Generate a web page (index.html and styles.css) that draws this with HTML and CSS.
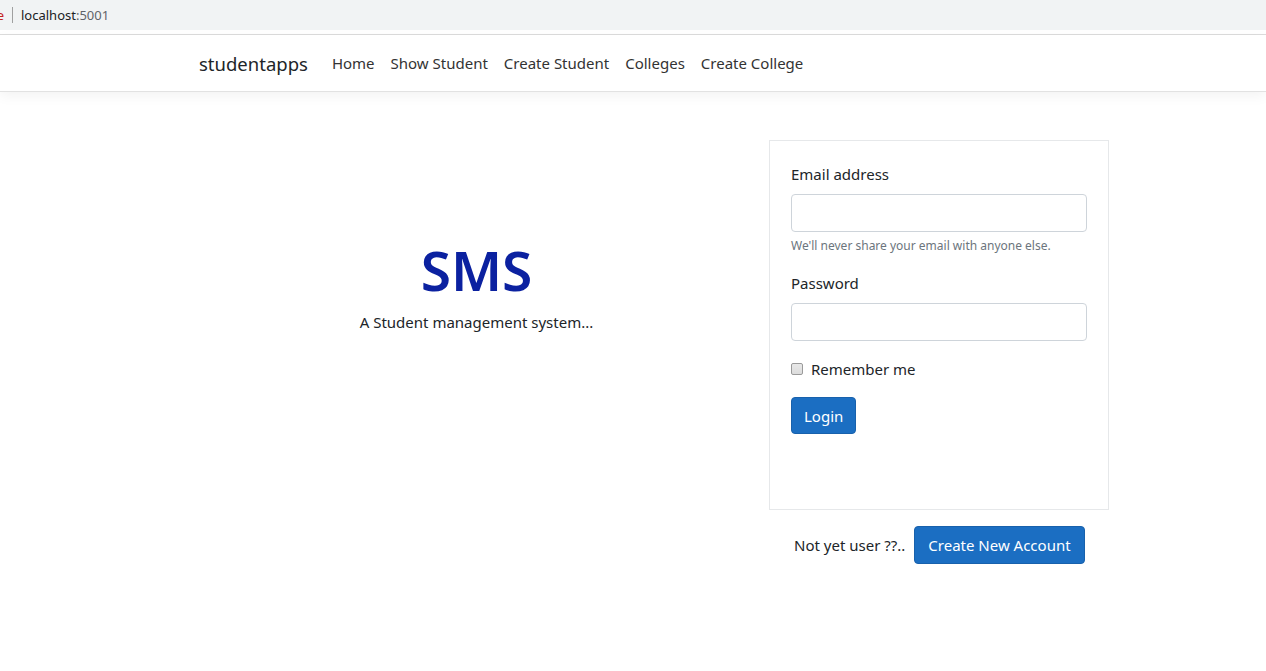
FILE: index.html
```html
<!DOCTYPE html>
<html lang="en">
<head>
<meta charset="utf-8">
<title>studentapps</title>
<link rel="stylesheet" href="styles.css">
</head>
<body>
<div class="chrome">
  <div class="addr"><span class="sec">e</span><span class="sep"></span><span class="host">localhost</span><span class="port">:5001</span></div>
</div>
<nav class="navbar">
  <a class="brand" href="#">studentapps</a>
  <ul class="nav-links">
    <li><a href="#">Home</a></li>
    <li><a href="#">Show Student</a></li>
    <li><a href="#">Create Student</a></li>
    <li><a href="#">Colleges</a></li>
    <li><a href="#">Create College</a></li>
  </ul>
</nav>
<main class="main">
  <section class="intro">
    <h1 class="title">SMS</h1>
    <p class="subtitle">A Student management system...</p>
  </section>
  <section class="side">
    <form class="card">
      <div class="group">
        <label class="label">Email address</label>
        <input class="input" type="email">
        <small class="help">We'll never share your email with anyone else.</small>
      </div>
      <div class="group">
        <label class="label">Password</label>
        <input class="input" type="password">
      </div>
      <div class="group check">
        <input class="checkbox" type="checkbox" id="rem">
        <label for="rem" class="check-label">Remember me</label>
      </div>
      <button class="btn" type="button">Login</button>
    </form>
    <div class="signup">
      <span class="signup-text">Not yet user ??..</span>
      <button class="btn btn-lg" type="button">Create New Account</button>
    </div>
  </section>
</main>
</body>
</html>
```

FILE: styles.css
```css
* { box-sizing: border-box; }
html, body { margin: 0; padding: 0; }
body {
  font-family: "Noto Sans", "Open Sans", sans-serif;
  font-size: 15px;
  color: #212529;
  background: #fff;
}
.chrome {
  height: 35px;
  background: #fff;
  border-bottom: 1px solid #dcdcdc;
}
.addr {
  height: 30px;
  background: #f1f3f4;
  display: flex;
  align-items: center;
  font-size: 13px;
  color: #202124;
}
.sec { color: #c5221f; width: 4px; overflow: hidden; display: inline-flex; justify-content: flex-end; }
.sep { width: 1px; height: 16px; background: #a0a0a0; margin: 0 8px 0 8px; }
.port { color: #5f6368; }
.navbar {
  height: 57px;
  display: flex;
  align-items: center;
  padding-left: 199px;
  border-bottom: 1px solid #e2e2e2;
  box-shadow: 0 4px 12px rgba(0,0,0,0.05);
}
.brand {
  font-size: 18.5px;
  color: #212529;
  text-decoration: none;
  margin-right: 16px;
}
.nav-links { display: flex; list-style: none; margin: 0; padding: 0; }
.nav-links a {
  display: block;
  padding: 8px 8px;
  color: #333;
  text-decoration: none;
}
.main {
  display: grid;
  grid-template-columns: 585px 340px;
  margin-left: 184px;
  padding-top: 48px;
}
.intro { text-align: center; padding-top: 95px; }
.title {
  margin: 0;
  font-size: 55px;
  font-weight: 600;
  line-height: 70px;
  color: #0b21a0;
}
.subtitle { margin: 5px 0 0; line-height: 24px; }
.card {
  border: 1px solid #e6e8ea;
  padding: 21px 21px 75px;
  display: flex;
  flex-direction: column;
  align-items: flex-start;
}
.group { width: 100%; margin-bottom: 16px; }
.label { display: block; line-height: 24px; margin-bottom: 8px; }
.input {
  display: block;
  width: 100%;
  height: 38px;
  border: 1px solid #ced4da;
  border-radius: 4px;
  font: inherit;
}
.help { display: block; margin-top: 5px; font-size: 12px; color: #6c757d; line-height: 18px; }
.check { display: flex; align-items: center; height: 24px; }
.checkbox {
  appearance: none;
  -webkit-appearance: none;
  margin: 0 8px 0 0;
  width: 12px;
  height: 12px;
  border: 1px solid #9a9a9a;
  border-radius: 2px;
  background: linear-gradient(#e8e8e8, #dcdcdc);
}
.check-label { line-height: 24px; }
.btn {
  font: inherit;
  color: #fff;
  background: #1b6ec2;
  border: 1px solid #1861ac;
  border-radius: 4px;
  height: 37px;
  padding: 0 12px;
}
.signup {
  display: flex;
  align-items: center;
  margin-top: 16px;
  padding-left: 25px;
}
.signup-text { margin-right: 9px; }
.btn-lg { height: 38px; padding: 0 13px; }
```
